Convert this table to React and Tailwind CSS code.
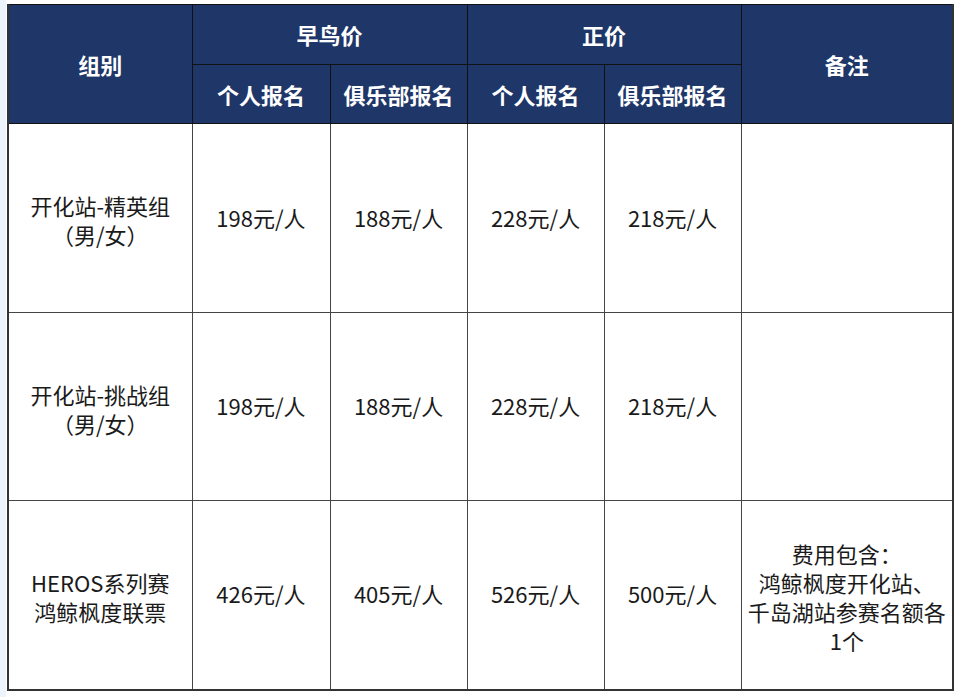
export default function App() {
  const font = { fontFamily: '"Noto Sans CJK SC", "Noto Sans", sans-serif' };
  const rows = [
    { name: ["开化站-精英组", "（男/女）"], p: ["198元/人", "188元/人", "228元/人", "218元/人"], note: [] },
    { name: ["开化站-挑战组", "（男/女）"], p: ["198元/人", "188元/人", "228元/人", "218元/人"], note: [] },
    { name: ["HEROS系列赛", "鸿鲸枫度联票"], p: ["426元/人", "405元/人", "526元/人", "500元/人"], note: ["费用包含：", "鸿鲸枫度开化站、", "千岛湖站参赛名额各", "1个"] },
  ];
  const heights = ["h-[189px]", "h-[188px]", "h-[189px]"];
  const th = "border border-[#111] bg-[#1f3668] text-white font-bold text-[22px] text-center align-middle p-0";
  const td = "border border-[#444] text-[#1a1a1a] text-[22px] leading-[29px] text-center align-middle p-0";
  return (
    <div className="flex w-[957px] h-[697px] bg-white" style={font}>
      <div className="w-[6px] h-full bg-[#eef4fc]" />
      <div className="pl-[1px] pt-[4px]">
        <table className="border-collapse table-fixed w-[945px] border-t border-t-[#999] border-x-2 border-x-[#333] border-b-2 border-b-[#333]">
          <colgroup>
            <col className="w-[184px]" />
            <col className="w-[138px]" />
            <col className="w-[137px]" />
            <col className="w-[137px]" />
            <col className="w-[137px]" />
            <col className="w-[212px]" />
          </colgroup>
          <thead>
            <tr className="h-[60px]">
              <th rowSpan={2} className={th}>组别</th>
              <th colSpan={2} className={th}>早鸟价</th>
              <th colSpan={2} className={th}>正价</th>
              <th rowSpan={2} className={th}>备注</th>
            </tr>
            <tr className="h-[59px]">
              <th className={th}>个人报名</th>
              <th className={th}>俱乐部报名</th>
              <th className={th}>个人报名</th>
              <th className={th}>俱乐部报名</th>
            </tr>
          </thead>
          <tbody>
            {rows.map((r, i) => (
              <tr key={i} className={heights[i]}>
                <td className={td}>
                  <div className="mt-[4px]">
                    {r.name.map((l, j) => (
                      <div key={j}>{l}</div>
                    ))}
                  </div>
                </td>
                {r.p.map((v, j) => (
                  <td key={j} className={td}>
                    <div className="-mt-[2px]">{v}</div>
                  </td>
                ))}
                <td className={td}>
                  <div className="mt-[4px]">
                    {r.note.map((l, j) => (
                      <div key={j} className="whitespace-nowrap">{l}</div>
                    ))}
                  </div>
                </td>
              </tr>
            ))}
          </tbody>
        </table>
      </div>
    </div>
  );
}
